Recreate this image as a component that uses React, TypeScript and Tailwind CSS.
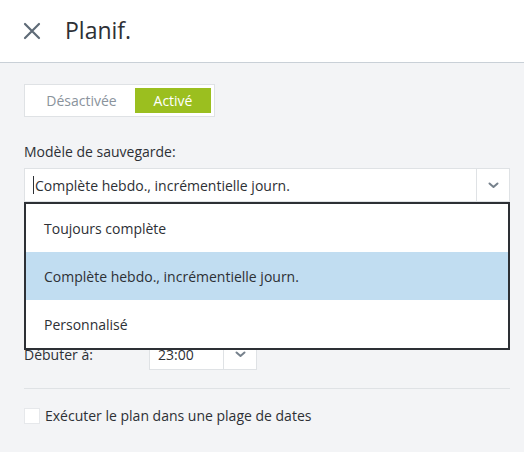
import { useState } from "react";

const options = [
  "Toujours complète",
  "Complète hebdo., incrémentielle journ.",
  "Personnalisé",
];

function Chevron() {
  return (
    <svg width="11" height="7" viewBox="0 0 11 7" fill="none" aria-hidden="true">
      <path d="M1.5 1.5 5.5 5 9.5 1.5" stroke="#76818c" strokeWidth="2" strokeLinecap="round" strokeLinejoin="round" />
    </svg>
  );
}

export default function App() {
  const [enabled, setEnabled] = useState(true);
  const [selected, setSelected] = useState(1);

  return (
    <div className="h-[452px] w-[524px] overflow-hidden bg-[#f3f4f6] font-['Open_Sans',sans-serif] text-[14px] text-[#2d3035]">
      {/* Header */}
      <header className="flex h-[63px] items-center border-b border-[#c9d0d7] bg-white pl-[23px]">
        <button type="button" aria-label="Fermer" className="flex h-[18px] w-[18px] items-center justify-center">
          <svg width="18" height="18" viewBox="0 0 18 18" fill="none">
            <path d="M2 2 16 16M16 2 2 16" stroke="#5f6b77" strokeWidth="2.2" strokeLinecap="round" />
          </svg>
        </button>
        <h1 className="ml-[24px] mt-[-1px] text-[23px] leading-none text-[#2d3035]">Planif.</h1>
      </header>

      <div className="px-6 pt-[21px]">
        {/* Toggle */}
        <div className="inline-flex h-[33px] border border-[#dfe2e5] bg-white p-[3px]">
          <button
            type="button"
            onClick={() => setEnabled(false)}
            className={`flex w-[107px] items-center justify-center ${!enabled ? "bg-[#9bbf1f] text-white" : "text-[#8a939c]"}`}
          >
            Désactivée
          </button>
          <button
            type="button"
            onClick={() => setEnabled(true)}
            className={`flex w-[76px] items-center justify-center ${enabled ? "bg-[#9bbf1f] text-white" : "text-[#8a939c]"}`}
          >
            Activé
          </button>
        </div>

        {/* Backup scheme */}
        <div className="mt-[25px] leading-5">Modèle de sauvegarde:</div>
        <div className="relative mt-[6px] w-[486px]">
          <div className="flex h-[34px] border border-[#dfe2e5] bg-white">
            <div className="flex flex-1 items-center pl-[8px]">
              <span className="mr-px h-[18px] w-px bg-[#2d3035]" />
              {options[selected]}
            </div>
            <div className="flex w-[33px] items-center justify-center border-l border-[#dfe2e5]">
              <Chevron />
            </div>
          </div>
          <ul className="absolute left-0 top-[34px] z-10 w-[486px] border-2 border-[#2d3035] bg-white">
            {options.map((o, i) => (
              <li
                key={o}
                onClick={() => setSelected(i)}
                className={`flex h-[48px] items-center pl-[18px] ${i === selected ? "bg-[#c1ddf1]" : ""}`}
              >
                {o}
              </li>
            ))}
          </ul>
        </div>

        {/* Start time */}
        <div className="mt-[136px] flex items-center">
          <span className="w-[125px]">Débuter à:</span>
          <div className="flex h-[32px] w-[108px] border border-[#dfe2e5] bg-white">
            <div className="flex flex-1 items-center pl-[8px]">23:00</div>
            <div className="flex w-[33px] items-center justify-center border-l border-[#dfe2e5]">
              <Chevron />
            </div>
          </div>
        </div>

        <div className="mt-[18px] h-px w-[486px] bg-[#dfe2e5]" />

        <label className="mt-[16px] flex items-center">
          <span className="h-[16px] w-[16px] border border-[#e6e8eb] bg-white" />
          <span className="ml-[5px]">Exécuter le plan dans une plage de dates</span>
        </label>
      </div>
    </div>
  );
}
